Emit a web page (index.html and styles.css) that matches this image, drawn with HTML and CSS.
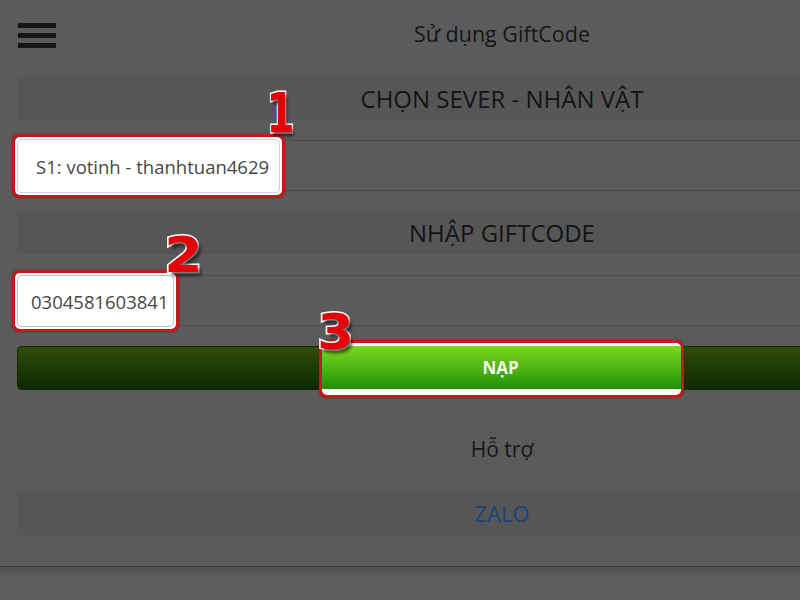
FILE: index.html
```html
<!DOCTYPE html>
<html lang="vi">
<head>
    <meta charset="UTF-8">
    <meta name="viewport" content="width=device-width, initial-scale=1.0">
    <title>Sử dụng GiftCode</title>
    <link rel="stylesheet" href="styles.css">
</head>
<body>
    <div class="screen">
        <div class="page">
            <header class="topbar">
                <div class="burger"><span></span><span></span><span></span></div>
                <h1 class="title">Sử dụng GiftCode</h1>
            </header>

            <main class="form">
                <div class="band">CHỌN SEVER - NHÂN VẬT</div>
                <div class="field">
                    <div class="mark mark-select">
                        <div class="mark-input">S1: votinh - thanhtuan4629</div>
                    </div>
                    <span class="num num-1">1</span>
                </div>

                <div class="band band-2">NHẬP GIFTCODE</div>
                <div class="field field-focus">
                    <div class="mark mark-code">
                        <div class="mark-input mark-input-focus">0304581603841</div>
                    </div>
                    <span class="num num-2">2</span>
                </div>

                <div class="submit">
                    <div class="mark mark-btn">
                        <div class="btn-hi">NẠP</div>
                    </div>
                    <span class="num num-3">3</span>
                </div>

                <p class="support">Hỗ trợ</p>
                <div class="band band-zalo">ZALO</div>
            </main>
        </div>
        <div class="bottom"></div>
    </div>
</body>
</html>
```

FILE: styles.css
```css
* { margin: 0; padding: 0; box-sizing: border-box; }
body { background: #5b5b5b; font-family: "Open Sans", "DejaVu Sans", sans-serif; color: #161616; }

.screen { width: 800px; height: 600px; overflow: hidden; }
.page { width: 987px; padding-left: 17px; height: 567px; border-bottom: 1px solid #3e3e3e; }

.topbar { height: 77px; display: flex; align-items: center; position: relative; }
.burger { display: flex; flex-direction: column; gap: 5px; margin: -6px 0 0 1px; }
.burger span { display: block; width: 38px; height: 5px; background: #161616; }
.title { position: absolute; left: 0; right: 0; top: 19px; text-align: center; font-size: 21.5px; font-weight: 400; color: #161616; }

.band { background: #565656; height: 43px; display: flex; align-items: center; justify-content: center; font-size: 24px; color: #141414; }
.band-2 { margin-top: 20px; }

.field { position: relative; height: 51px; margin-top: 20px; border-top: 1px solid #4a4a4a; border-bottom: 1px solid #4a4a4a; border-radius: 4px; }
.field-focus { border-color: #48505e; margin-top: 21px; }

.mark { position: absolute; background: #fff; border: 3px solid #c8161c; border-radius: 8px; box-shadow: 0 0 2px rgba(120,0,0,0.6); padding: 2px; }
.mark-select { left: -5px; top: -7px; width: 273px; height: 64px; }
.mark-code { left: -5px; top: -6px; width: 167px; height: 62px; }
.mark-input { height: 100%; border: 1px solid #c9d3de; border-radius: 4px; display: flex; align-items: center; padding-left: 18px; font-size: 18.5px; color: #474747; white-space: nowrap; overflow: hidden; }
.mark-input-focus { border-color: #a9c4de; padding-left: 13px; }

.num { position: absolute; font-family: "DejaVu Sans", sans-serif; font-weight: 900; color: #e6000a; -webkit-text-stroke: 3px #fff; paint-order: stroke fill; text-shadow: 3px 4px 3px rgba(0,0,0,0.55); line-height: 1; }
.num-1 { left: 244px; top: -56px; font-size: 56px; transform: scaleX(0.72); }
.num-2 { left: 149px; top: -46px; font-size: 50px; transform: scaleX(1.1); }
.num-3 { left: 300px; top: -40px; font-size: 50px; transform: scaleX(1.05); }

.submit { position: relative; margin-top: 20px; height: 44px; border-radius: 4px; border: 1px solid #142a02; background: linear-gradient(#324b0b, #0b2a00); }
.mark-btn { left: 301px; top: -7px; width: 365px; height: 58px; padding: 3px 0 6px 0; border-radius: 8px; }
.btn-hi { height: 100%; background: linear-gradient(#7fd81e, #21900a); display: flex; align-items: center; justify-content: center; font-weight: 700; font-size: 17px; color: #f4f8ea; padding-right: 2px; }

.support { text-align: center; font-size: 21px; margin-top: 44px; height: 30px; line-height: 30px; }
.band-zalo { margin-top: 27px; height: 44px; color: #1a4280; font-size: 22px; }

.bottom { height: 33px; background: linear-gradient(#4f4f4f, #5e5e5e 10px); }
```
